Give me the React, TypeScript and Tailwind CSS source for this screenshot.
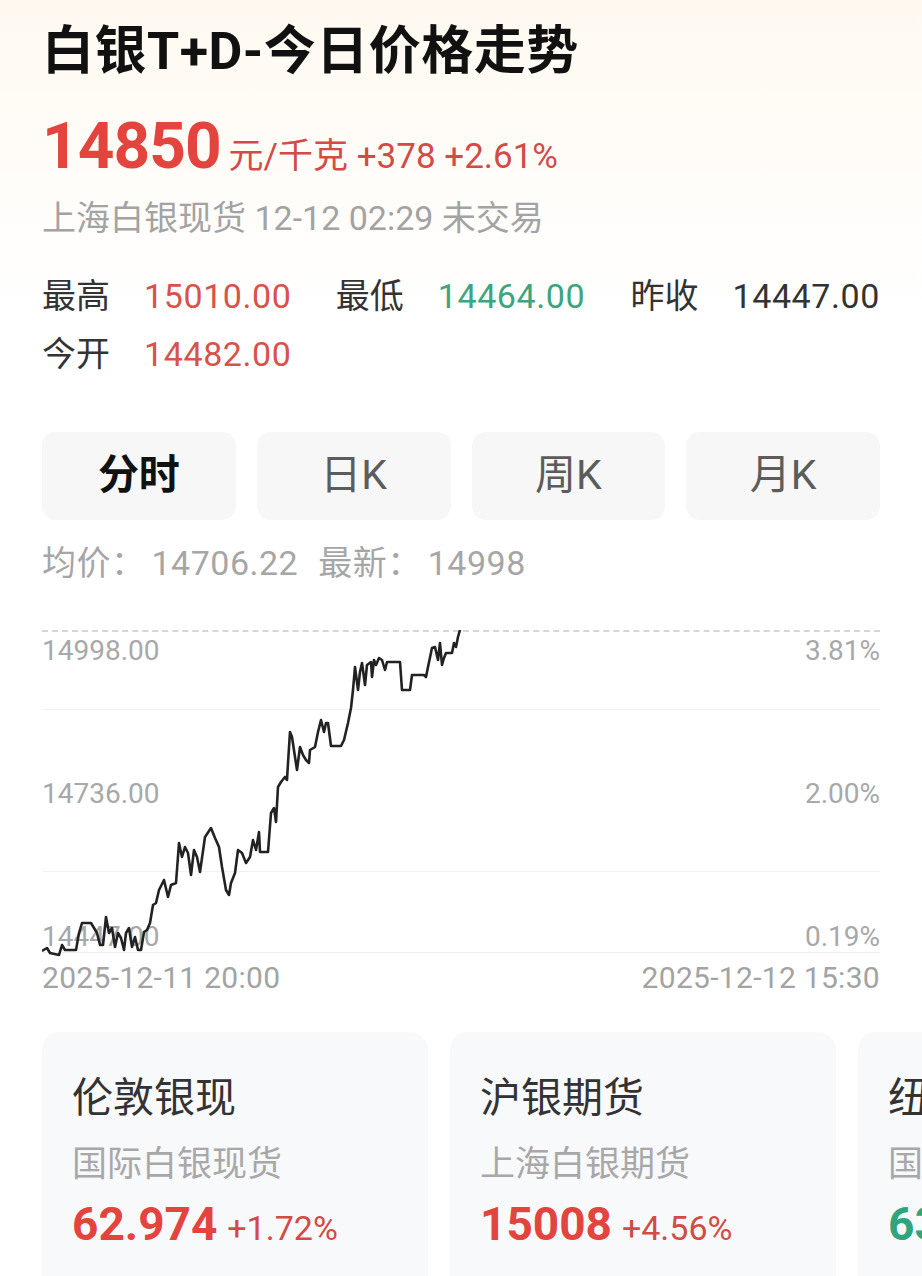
import React from "react";

const FONT = "font-['Roboto','Noto_Sans_CJK_SC',sans-serif]";

// price line, coords relative to the dashed top line of the chart
const POINTS: [number, number][] = [
  [0, 321], [5, 318], [8, 323], [17, 325], [20, 315], [23, 320], [34, 320], [37, 303], [40, 293],
  [49, 293], [52, 298], [55, 303], [58, 315], [61, 315], [64, 287], [67, 303], [70, 298], [73, 317],
  [76, 303], [79, 308], [82, 320], [84, 303], [87, 298], [90, 317], [93, 307], [96, 320], [99, 320],
  [102, 302], [105, 300], [108, 293], [111, 275], [114, 273], [117, 260], [122, 250], [126, 267],
  [129, 255], [134, 253], [137, 213], [140, 227], [143, 217], [146, 223], [149, 245], [152, 220],
  [155, 227], [158, 242], [163, 207], [169, 198], [173, 208], [177, 217], [180, 237], [184, 260],
  [187, 265], [189, 253], [193, 243], [196, 220], [200, 223], [204, 233], [208, 227], [211, 210],
  [214, 220], [217, 202], [218, 222], [226, 222], [229, 183], [232, 178], [234, 192], [236, 157],
  [239, 152], [243, 147], [245, 150], [246, 133], [248, 102], [250, 107], [253, 127], [255, 140],
  [258, 117], [261, 125], [264, 130], [267, 133], [268, 120], [273, 117], [276, 102], [279, 90],
  [282, 102], [284, 93], [286, 93], [289, 116], [299, 116], [302, 110], [306, 93], [309, 78],
  [311, 60], [313, 37], [316, 60], [318, 42], [320, 33], [323, 55], [325, 35], [329, 32], [330, 47],
  [332, 30], [334, 35], [337, 28], [340, 30], [343, 40], [345, 32], [358, 32], [360, 60], [368, 60],
  [370, 45], [382, 45], [384, 47], [386, 37], [390, 18], [393, 17], [396, 30], [398, 13], [400, 35],
  [402, 28], [404, 23], [410, 23], [412, 13], [414, 17], [416, 7], [418, 0],
];

const tabs = ["分时", "日K", "周K", "月K"];

const cards = [
  { name: "伦敦银现", sub: "国际白银现货", price: "62.974", chg: "+1.72%", up: true },
  { name: "沪银期货", sub: "上海白银期货", price: "15008", chg: "+4.56%", up: true },
  { name: "纽约白银", sub: "国际白银期货", price: "63.512", chg: "-0.35%", up: false },
];

function Stat({ label, value, color }: { label: string; value: string; color: string }) {
  return (
    <div className="flex items-center">
      <span className="w-[102px] text-[#333]">{label}</span>
      <span className={`${color} tracking-[0.6px]`}>{value}</span>
    </div>
  );
}

export default function App() {
  const d = POINTS.map(([x, y], i) => `${i === 0 ? "M" : "L"}${x} ${y}`).join(" ");

  return (
    <div className={`${FONT} w-[922px] h-[1276px] overflow-hidden bg-[linear-gradient(180deg,#fff9f0_0px,#fffdfa_200px,#ffffff_320px)]`}>
      <div className="px-[42px] pt-[22px]">
        {/* Title */}
        <h1 className="text-[52px] font-bold leading-[60px] text-[#111] tracking-[0.5px]">白银T+D-今日价格走势</h1>

        {/* Price */}
        <div className="mt-[30px] flex items-baseline text-[#e3443d] h-[70px]">
          <span className="text-[64px] font-bold leading-[70px] tracking-[-1px]">14850</span>
          <span className="ml-[8px] text-[35px] text-[#d24b47]">元/千克 +378 +2.61%</span>
        </div>
        <div className="mt-[16px] text-[34px] leading-[40px] text-[#a3a3a3]">上海白银现货 12-12 02:29 未交易</div>

        {/* Stats */}
        <div className="mt-[36px] text-[34px] leading-[44px]">
          <div className="flex">
            <div className="w-[294px]"><Stat label="最高" value="15010.00" color="text-[#d9524b]" /></div>
            <div className="w-[295px]"><Stat label="最低" value="14464.00" color="text-[#3aa57e]" /></div>
            <Stat label="昨收" value="14447.00" color="text-[#333]" />
          </div>
          <div className="mt-[14px] flex">
            <Stat label="今开" value="14482.00" color="text-[#d9524b]" />
          </div>
        </div>

        {/* Tabs */}
        <div className="mt-[56px] grid grid-cols-4 gap-[21px]">
          {tabs.map((t, i) => (
            <div
              key={t}
              className={`h-[88px] rounded-[14px] bg-[#f7f7f7] flex items-center justify-center text-[41px] ${
                i === 0 ? "font-bold text-[#111]" : "text-[#5c5c5c]"
              }`}
            >
              {t}
            </div>
          ))}
        </div>

        <div className="mt-[23px] flex items-center text-[34px] leading-[40px] text-[#a6a6a6] tracking-[0.5px]">
          <span>均价：</span>
          <span className="ml-[6px]">14706.22</span>
          <span className="ml-[20px]">最新：</span>
          <span className="ml-[6px]">14998</span>
        </div>

        {/* Chart */}
        <div className="mt-[47px] relative border-t-2 border-dashed border-[#d6d6d6]">
          <div className="h-[78px] border-b border-[#f2f2f2]" />
          <div className="h-[81px]" />
          <div className="h-[81px] border-b border-[#f2f2f2]" />
          <div className="h-[81px] border-b border-[#eeeeee]" />

          <div className="absolute inset-0 text-[28px] text-[#a8a8a8]">
            <div className="absolute left-0 right-0 top-[4px] flex justify-between leading-[30px]">
              <span>14998.00</span>
              <span>3.81%</span>
            </div>
            <div className="absolute left-0 right-0 top-[147px] flex justify-between leading-[30px]">
              <span>14736.00</span>
              <span>2.00%</span>
            </div>
            <div className="absolute left-0 right-0 top-[290px] flex justify-between leading-[30px]">
              <span>14447.00</span>
              <span>0.19%</span>
            </div>
          </div>

          <svg className="absolute left-0 top-[-2px]" width="838" height="330" viewBox="0 0 838 330">
            <path d={d} fill="none" stroke="#222" strokeWidth="2.6" strokeLinejoin="round" />
          </svg>
        </div>
        <div className="mt-[7px] flex justify-between text-[30px] leading-[36px] text-[#a3a3a3] tracking-[0.3px]">
          <span>2025-12-11 20:00</span>
          <span>2025-12-12 15:30</span>
        </div>

        {/* Cards */}
        <div className="mt-[36px] flex gap-[22px] w-[1300px]">
          {cards.map((c) => (
            <div key={c.name} className="w-[386px] h-[300px] shrink-0 rounded-[18px] bg-[#f8f9fb] px-[30px] pt-[42px]">
              <div className="text-[41px] leading-[48px] text-[#333]">{c.name}</div>
              <div className="mt-[21px] text-[35px] leading-[44px] text-[#a8a8a8]">{c.sub}</div>
              <div className={`mt-[9px] flex items-baseline ${c.up ? "text-[#e3443d]" : "text-[#2fa57b]"}`}>
                <span className="text-[46px] font-bold leading-[56px]">{c.price}</span>
                <span className={`ml-[10px] text-[34px] ${c.up ? "text-[#d24b47]" : "text-[#2fa57b]"}`}>{c.chg}</span>
              </div>
            </div>
          ))}
        </div>
      </div>
    </div>
  );
}
